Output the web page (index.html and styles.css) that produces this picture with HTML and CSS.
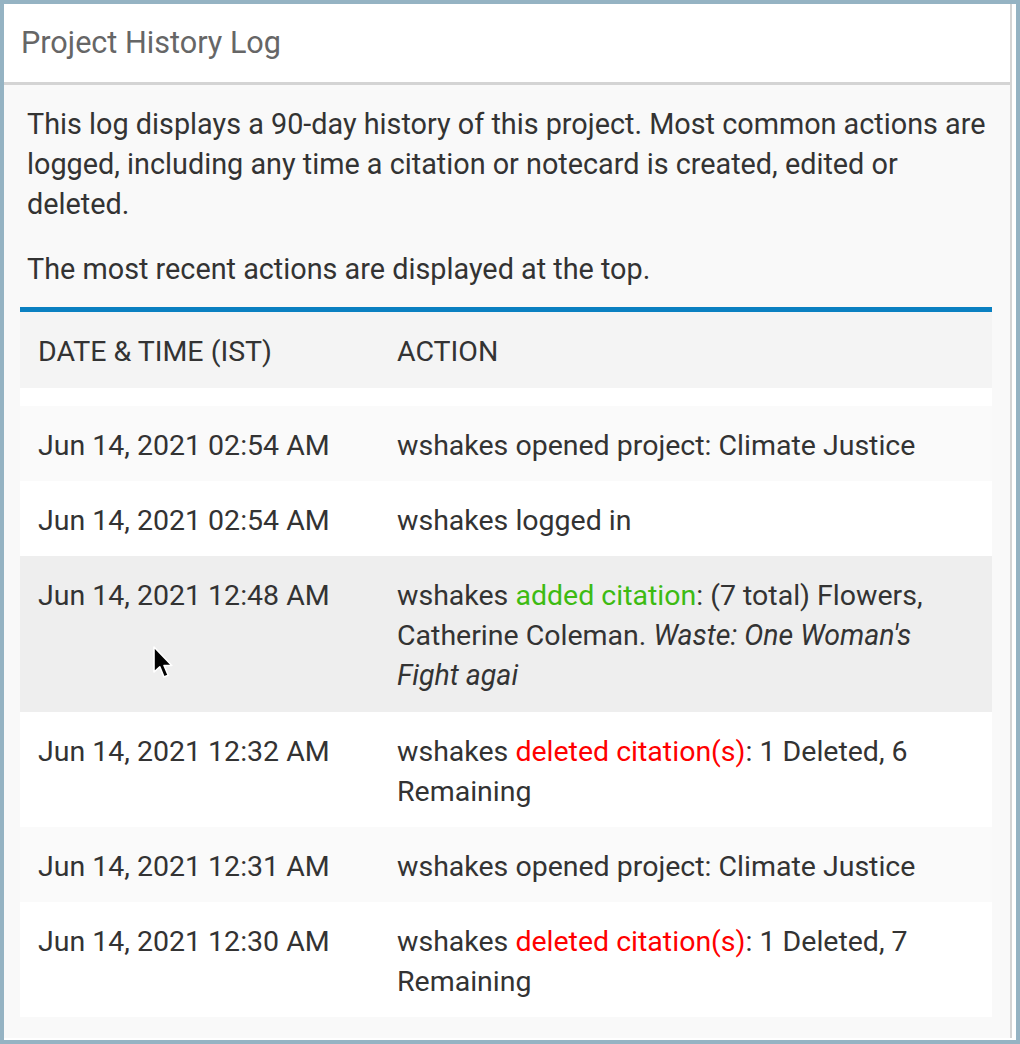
FILE: index.html
```html
<!DOCTYPE html>
<html>
<head>
<meta charset="utf-8">
<link rel="stylesheet" href="styles.css">
</head>
<body>
<div class="frame">
  <div class="panel">
    <div class="header">Project History Log</div>
    <div class="content">
      <p class="intro">This log displays a 90-day history of this project. Most common actions are logged, including any time a citation or notecard is created, edited or deleted.</p>
      <p class="intro second">The most recent actions are displayed at the top.</p>
      <table class="log">
        <thead>
          <tr><th class="c-date">DATE &amp; TIME (IST)</th><th>ACTION</th></tr>
        </thead>
        <tbody>
          <tr class="spacer"><td></td><td></td></tr>
          <tr class="odd"><td>Jun 14, 2021 02:54 AM</td><td>wshakes opened project: Climate Justice</td></tr>
          <tr class="even"><td>Jun 14, 2021 02:54 AM</td><td>wshakes logged in</td></tr>
          <tr class="hover"><td class="cursor-cell">Jun 14, 2021 12:48 AM<svg class="cursor" width="24" height="36" viewBox="0 0 24 36"><path d="M2 2 L2 27 L7.8 21.8 L12 32 L16.2 30.3 L12 20.5 L19.8 20.5 Z" fill="#000" stroke="#fff" stroke-width="1.6" stroke-linejoin="round"/></svg></td><td>wshakes <span class="add">added citation</span>: (7 total) Flowers, Catherine Coleman. <em>Waste: One Woman's Fight agai</em></td></tr>
          <tr class="even"><td>Jun 14, 2021 12:32 AM</td><td>wshakes <span class="del">deleted citation(s)</span>: 1 Deleted, 6 Remaining</td></tr>
          <tr class="odd"><td>Jun 14, 2021 12:31 AM</td><td>wshakes opened project: Climate Justice</td></tr>
          <tr class="even"><td>Jun 14, 2021 12:30 AM</td><td>wshakes <span class="del">deleted citation(s)</span>: 1 Deleted, 7 Remaining</td></tr>
        </tbody>
      </table>
    </div>
  </div>
</div>
</body>
</html>
```

FILE: styles.css
```css
html, body {
  margin: 0;
  padding: 0;
}
body {
  background: #95b3c3;
  font-family: Roboto, "Liberation Sans", sans-serif;
  width: 1020px;
  height: 1044px;
  overflow: hidden;
}
.frame {
  margin: 4px;
  width: 1012px;
  height: 1036px;
  background: #ffffff;
  box-sizing: border-box;
  padding-right: 4px;
}
.panel {
  height: 1034px;
  background: #f9f9f9;
  border-right: 2px solid #d4d4d4;
  box-sizing: border-box;
  width: 1008px;
}
.header {
  background: #ffffff;
  height: 78px;
  border-bottom: 3px solid #d4d4d4;
  box-sizing: content-box;
  font-size: 30.6px;
  color: #666666;
  padding-left: 17px;
  line-height: 78px;
}
.content {
  padding: 19px 16px 0 16px;
}
.intro {
  margin: 0 0 0 7px;
  font-size: 28.8px;
  line-height: 40px;
  color: #333333;
}
.intro.second {
  margin-top: 25px;
  margin-bottom: 18px;
}
.log {
  width: 972px;
  border-collapse: separate;
  border-spacing: 0;
  border-top: 5px solid #0a80c1;
  font-size: 28.5px;
  color: #333333;
}
.log th {
  background: #f4f4f4;
  text-align: left;
  font-weight: normal;
  height: 76px;
  padding: 3px 18px 0 18px;
  box-sizing: border-box;
  line-height: 40px;
}
.log th.c-date {
  width: 359px;
}
.log td {
  padding: 20px 18px 15px 18px;
  line-height: 40px;
  vertical-align: top;
}
.log tr.spacer td {
  background: #ffffff;
  padding: 0;
  height: 18px;
}
.log tr.odd td {
  background: #fafafa;
}
.log tr.even td {
  background: #ffffff;
}
.log tr.hover td {
  background: #eeeeee;
  padding-bottom: 16px;
}
.add {
  color: #3dbb12;
}
.del {
  color: #ff0000;
}
.log em {
  font-style: italic;
}
.cursor-cell {
  position: relative;
}
.cursor {
  position: absolute;
  left: 132px;
  top: 89px;
}
```
